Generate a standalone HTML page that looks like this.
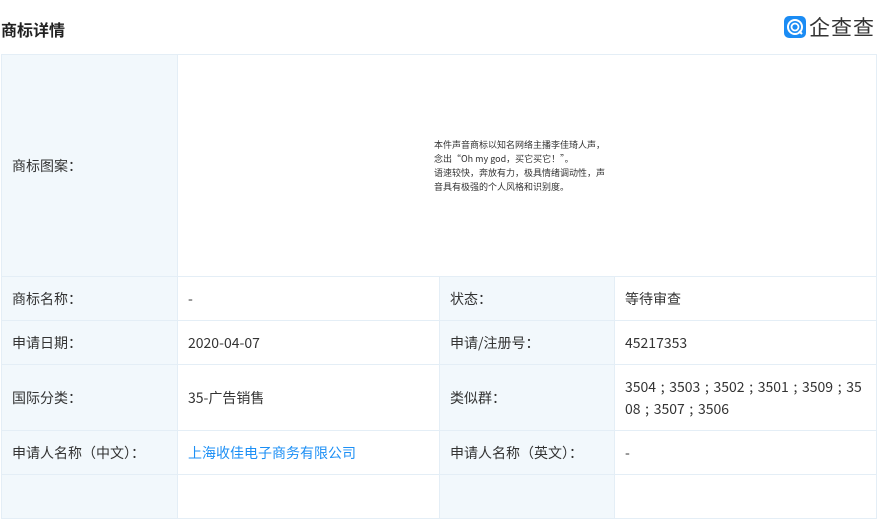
<!DOCTYPE html>
<html><head><meta charset="utf-8"><style>
body{margin:0;width:891px;height:479px;overflow:hidden;background:#fff;font-family:"Noto Sans CJK SC","Liberation Sans",sans-serif;color:#333;}
.title{position:absolute;left:1px;top:18px;font-size:16px;font-weight:bold;color:#222;line-height:22px}
.logo{position:absolute;left:784px;top:16px;display:flex;align-items:center;}
.logo .ic{width:22px;height:22px;background:#1b8cf4;border-radius:5px;position:relative;}
.logo span{font-size:21px;color:#333;margin-left:3px;letter-spacing:1px;line-height:22px}
table{position:absolute;left:1px;top:54px;border-collapse:collapse;font-size:14px;table-layout:fixed;width:875px}
td{border:1px solid #e4eef6;padding:0 10px;height:43px;line-height:22px;word-break:break-all}
td.l{background:#f2f8fc;}
a{color:#1c8ff5;text-decoration:none}
.img{font-size:9px;line-height:14px;color:#333;}
</style></head><body>
<div class="title">商标详情</div>
<div class="logo"><div class="ic"><svg width="22" height="22" viewBox="0 0 22 22"><circle cx="11" cy="11" r="7" fill="none" stroke="#fff" stroke-width="2"/><circle cx="11" cy="11" r="3.5" fill="none" stroke="#fff" stroke-width="1.8"/><path d="M15 15l3 3" stroke="#fff" stroke-width="2"/></svg></div><span>企查查</span></div>
<table>
<colgroup><col style="width:176px"><col style="width:262px"><col style="width:175px"><col style="width:262px"></colgroup>
<tr><td class="l" style="height:221px">商标图案：</td><td colspan="3" style="text-align:left;padding-left:256px"><div class="img">本件声音商标以知名网络主播李佳琦人声，<br>念出“Oh my god，买它买它！”。<br>语速较快，奔放有力，极具情绪调动性，声<br>音具有极强的个人风格和识别度。</div></td></tr>
<tr><td class="l">商标名称：</td><td>-</td><td class="l">状态：</td><td>等待审查</td></tr>
<tr><td class="l">申请日期：</td><td>2020-04-07</td><td class="l">申请/注册号：</td><td>45217353</td></tr>
<tr><td class="l" style="height:65px">国际分类：</td><td>35-广告销售</td><td class="l">类似群：</td><td style="word-spacing:1.5px">3504 ; 3503 ; 3502 ; 3501 ; 3509 ; 3508 ; 3507 ; 3506</td></tr>
<tr><td class="l">申请人名称（中文）：</td><td><a>上海收佳电子商务有限公司</a></td><td class="l">申请人名称（英文）：</td><td>-</td></tr>
<tr><td class="l"></td><td></td><td class="l"></td><td></td></tr>
</table>
</body></html>
